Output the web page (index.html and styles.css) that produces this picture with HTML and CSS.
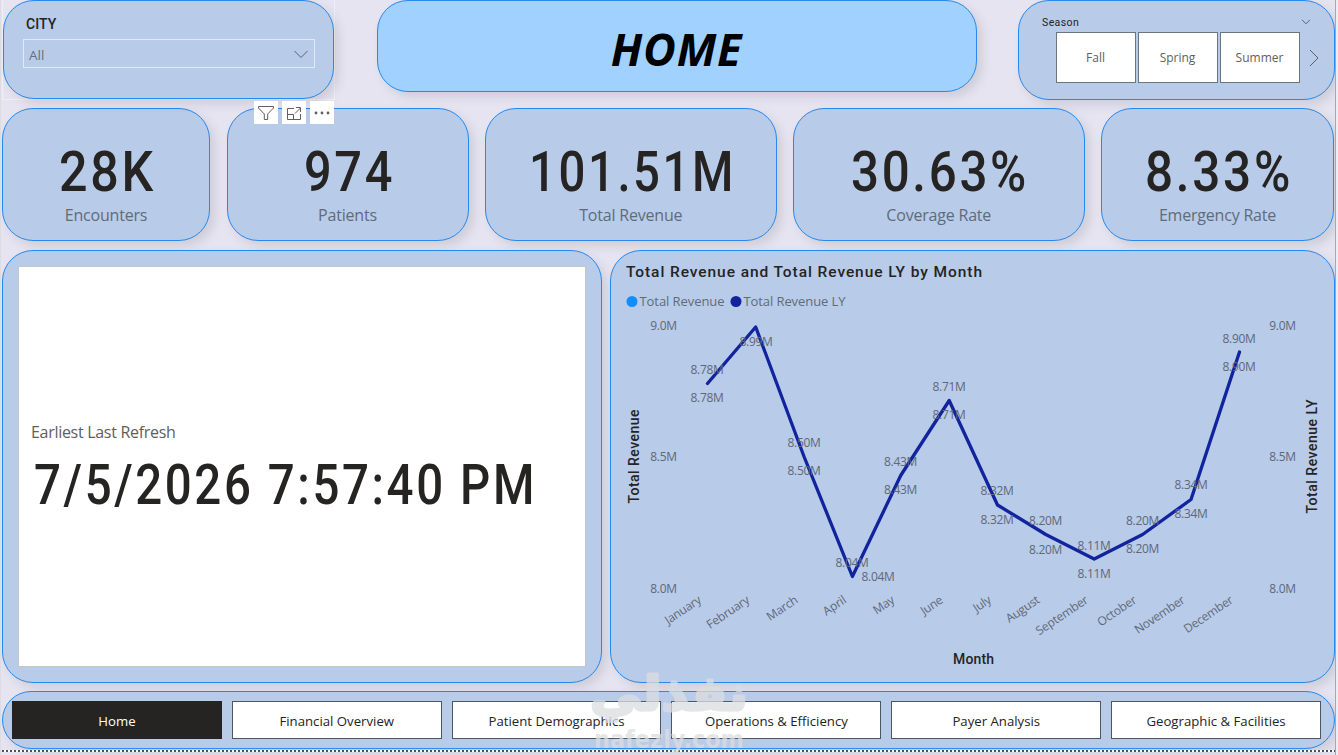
FILE: index.html
```
<!DOCTYPE html>
<html lang="en">
<head>
  <meta charset="UTF-8">
  <meta name="viewport" content="width=device-width, initial-scale=1.0">
  <title>Home</title>
  <link rel="stylesheet" href="styles.css">
</head>
<body>
  <div class="report">
    <div class="row top-row">
      <div class="city-slicer">
        <div class="card city-card">
          <label class="slicer-title">CITY</label>
          <div class="dropdown">
            <span>All</span>
            <svg width="14" height="9" viewBox="0 0 14 9"><path d="M0.5 1 L7 7.5 L13.5 1"/></svg>
          </div>
        </div>
        <div class="visual-tools">
          <button><svg width="18" height="18" viewBox="0 0 18 18"><path d="M1.5 2.5 H16.5 V4 L10.7 10 V15.5 H7.3 V10 L1.5 4 Z"/></svg></button>
          <button><svg width="18" height="18" viewBox="0 0 18 18"><path d="M9 4.500 H2.500 V15.500 H15.500 V10 M2.500 10.500 H8.500 V15.500 M10 9.500 L15.500 4 M11 3.500 H15.500 V8"/></svg></button>
          <button><svg class="dots" width="18" height="18" viewBox="0 0 18 18"><circle cx="3" cy="9" r="1.4"/><circle cx="9" cy="9" r="1.4"/><circle cx="15" cy="9" r="1.4"/></svg></button>
        </div>
      </div>

      <div class="card header-card">
        <h1>HOME</h1>
      </div>

      <div class="card season-card">
        <div class="season-head">
          <span>Season</span>
          <svg width="10" height="6" viewBox="0 0 10 6"><path d="M1 0.8 L5 4.8 L9 0.8"/></svg>
        </div>
        <div class="season-tiles">
          <div class="tile">Fall</div>
          <div class="tile">Spring</div>
          <div class="tile">Summer</div>
          <svg width="10" height="18" viewBox="0 0 10 18"><path d="M1 1 L9 9 L1 17"/></svg>
        </div>
      </div>
    </div>

    <div class="row kpi-row">
      <div class="card kpi">
        <svg class="value" width="94" height="46"><text x="0" y="43" textLength="97" lengthAdjust="spacingAndGlyphs">28K</text></svg>
        <span class="kpi-label">Encounters</span>
      </div>
      <div class="card kpi">
        <svg class="value" width="88" height="46"><text x="0" y="43" textLength="91" lengthAdjust="spacingAndGlyphs">974</text></svg>
        <span class="kpi-label">Patients</span>
      </div>
      <div class="card kpi">
        <svg class="value" width="206" height="46"><text x="1" y="43" textLength="207" lengthAdjust="spacingAndGlyphs">101.51M</text></svg>
        <span class="kpi-label">Total Revenue</span>
      </div>
      <div class="card kpi">
        <svg class="value" width="176" height="46"><text x="0" y="43" textLength="178" lengthAdjust="spacingAndGlyphs">30.63%</text></svg>
        <span class="kpi-label">Coverage Rate</span>
      </div>
      <div class="card kpi">
        <svg class="value" width="146" height="46"><text x="0" y="43" textLength="148" lengthAdjust="spacingAndGlyphs">8.33%</text></svg>
        <span class="kpi-label">Emergency Rate</span>
      </div>
    </div>

    <div class="row main-row">
      <div class="card refresh-card">
        <div class="refresh">
          <span class="refresh-label">Earliest Last Refresh</span>
          <svg class="value" width="510" height="52"><text x="0" y="44" textLength="503" lengthAdjust="spacingAndGlyphs">7/5/2026 7:57:40 PM</text></svg>
        </div>
      </div>

      <div class="card chart-card">
        <svg class="chart" width="723" height="431" viewBox="611 251 723 431">
          <text class="chart-title" x="626" y="277" textLength="356">Total Revenue and Total Revenue LY by Month</text>
          <circle cx="632" cy="301.500" r="5.500" fill="#118dff"/>
          <text class="legend" x="639.500" y="306" textLength="85">Total Revenue</text>
          <circle cx="736" cy="301.500" r="5.500" fill="#12239e"/>
          <text class="legend" x="743.500" y="306" textLength="102">Total Revenue LY</text>

          <g class="labels">
            <text x="663.500" y="330">9.0M</text>
            <text x="663.500" y="461">8.5M</text>
            <text x="663.500" y="593">8.0M</text>
            <text x="1282.500" y="330">9.0M</text>
            <text x="1282.500" y="461">8.5M</text>
            <text x="1282.500" y="593">8.0M</text>
          </g>

          <polyline class="line" points="707.5,383.500 755.7,327 804,456.500 852.4,576.500 900.7,475.500 949.2,400.500 997.5,505 1045.8,534.500 1094.2,559 1142.6,534.500 1191,499.500 1239.500,352"/>

          <g class="labels">
            <text x="707" y="374">8.78M</text>
            <text x="707" y="402">8.78M</text>
            <text x="756" y="346">8.99M</text>
            <text x="804" y="447">8.50M</text>
            <text x="804" y="475">8.50M</text>
            <text x="852" y="567">8.04M</text>
            <text x="878" y="581">8.04M</text>
            <text x="900.500" y="466">8.43M</text>
            <text x="900.500" y="494">8.43M</text>
            <text x="949" y="391">8.71M</text>
            <text x="949" y="419">8.71M</text>
            <text x="997" y="495">8.32M</text>
            <text x="997" y="524">8.32M</text>
            <text x="1045.500" y="525">8.20M</text>
            <text x="1045.500" y="554">8.20M</text>
            <text x="1094" y="550">8.11M</text>
            <text x="1094" y="578">8.11M</text>
            <text x="1142.500" y="525">8.20M</text>
            <text x="1142.500" y="553">8.20M</text>
            <text x="1191" y="489">8.34M</text>
            <text x="1191" y="518">8.34M</text>
            <text x="1239" y="343">8.90M</text>
            <text x="1239" y="371">8.90M</text>
          </g>

          <g class="months">
            <text transform="translate(702 602) rotate(-34)">January</text>
            <text transform="translate(750.300 602) rotate(-34)">February</text>
            <text transform="translate(798.700 602) rotate(-34)">March</text>
            <text transform="translate(847 602) rotate(-34)">April</text>
            <text transform="translate(895.400 602) rotate(-34)">May</text>
            <text transform="translate(943.800 602) rotate(-34)">June</text>
            <text transform="translate(992 602) rotate(-34)">July</text>
            <text transform="translate(1040.500 602) rotate(-34)">August</text>
            <text transform="translate(1089 602) rotate(-34)">September</text>
            <text transform="translate(1137.300 602) rotate(-34)">October</text>
            <text transform="translate(1185.700 602) rotate(-34)">November</text>
            <text transform="translate(1234 602) rotate(-34)">December</text>
          </g>

          <text class="axis-title" transform="translate(639 503.500) rotate(-90)" textLength="94">Total Revenue</text>
          <text class="axis-title" transform="translate(1317 513.500) rotate(-90)" textLength="114">Total Revenue LY</text>
          <text class="axis-title" x="953" y="664" textLength="41">Month</text>
        </svg>
      </div>
    </div>

    <div class="card nav-card">
      <a class="nav-button active">Home</a>
      <a class="nav-button">Financial Overview</a>
      <a class="nav-button">Patient Demographics</a>
      <a class="nav-button">Operations &amp; Efficiency</a>
      <a class="nav-button">Payer Analysis</a>
      <a class="nav-button">Geographic &amp; Facilities</a>
    </div>
    <div class="page-end"></div>

    <svg class="watermark" width="180" height="95" viewBox="580 660 180 95">
      <text class="arabic" x="669" y="710" textLength="158" lengthAdjust="spacingAndGlyphs">نفذلي</text>
      <text class="latin" x="669" y="748" textLength="150" lengthAdjust="spacingAndGlyphs">nafezly.com</text>
    </svg>
  </div>
</body>
</html>
```
FILE: styles.css
```
* {
  box-sizing: border-box;
}

body {
  margin: 0;
  background-color: #eeedf3;
  font-family: "Open Sans", sans-serif;
  color: #252423;
  overflow: hidden;
}

svg {
  display: block;
  flex: none;
}

.report {
  position: relative;
  display: flex;
  flex-direction: column;
  width: 1336px;
  height: 755px;
  padding-left: 1px;
  background-color: #e6e4f1;
  border-left: 1px solid #dcdde0;
  border-right: 1px solid #a5a8b4;
  overflow: hidden;
}

.row {
  display: flex;
}

.card {
  background-color: #b8cbe9;
  border: 1px solid #2789ed;
  border-radius: 31px;
  box-shadow: 5px 5px 10px rgba(90, 95, 105, 0.17);
}

/* top row */
.top-row {
  height: 108px;
  justify-content: space-between;
  align-items: flex-start;
}

.city-slicer {
  position: relative;
  width: 333px;
  height: 100px;
  border: 1px solid #eef0f5;
  border-top: none;
}

.city-card {
  height: 99px;
  padding: 15px 18px 0 19px;
}

.slicer-title {
  display: block;
  padding-left: 3px;
  font-family: Roboto, sans-serif;
  font-weight: 500;
  font-size: 14px;
  line-height: 16px;
  letter-spacing: 0.1px;
}

.dropdown {
  display: flex;
  align-items: center;
  justify-content: space-between;
  height: 29px;
  margin-top: 7px;
  padding: 2px 6px 0 5px;
  border: 1px solid #e2e9f4;
  font-size: 13.5px;
  color: #66707d;
}

.dropdown svg,
.season-card svg {
  fill: none;
  stroke: #59616d;
  stroke-width: 1;
}

/* hover toolbar that hangs under the selected slicer */
.visual-tools {
  position: absolute;
  right: 0;
  top: 101px;
  display: flex;
  gap: 4px;
  z-index: 2;
}

.visual-tools button {
  width: 24px;
  height: 23px;
  padding: 3px;
  border: none;
  background-color: #fff;
}

.visual-tools svg {
  fill: none;
  stroke: #605e5c;
  stroke-width: 1;
}

.visual-tools .dots {
  fill: #605e5c;
  stroke: none;
}

.header-card {
  width: 600px;
  height: 92px;
  background-color: #a0d1ff;
  display: flex;
  align-items: center;
  justify-content: center;
}

h1 {
  margin: 5px 0 0;
  font-size: 45px;
  line-height: 50px;
  font-weight: 700;
  font-style: italic;
  letter-spacing: 0.8px;
  color: #000;
}

.season-card {
  width: 317px;
  height: 100px;
  padding: 14px 15px 0 23px;
}

.season-head {
  display: flex;
  justify-content: space-between;
  align-items: center;
  height: 14px;
  padding-right: 8px;
  font-family: Roboto, sans-serif;
  font-size: 10.5px;
  letter-spacing: 0.4px;
}

.season-tiles {
  display: flex;
  align-items: center;
  gap: 2px;
  margin-top: 3px;
  padding-left: 13.5px;
}

.tile {
  width: 80px;
  height: 51px;
  border: 1px solid #69757f;
  background-color: #fff;
  font-size: 12px;
  line-height: 50px;
  text-align: center;
  color: #605e5c;
}

.season-tiles svg {
  margin-left: 7px;
}

/* number cards */
.kpi-row {
  gap: 16.5px;
  height: 142px;
}

.kpi {
  display: flex;
  flex-direction: column;
  align-items: center;
  flex: none;
  height: 133px;
  padding-top: 39px;
}

.kpi:nth-child(1) { width: 208px; }
.kpi:nth-child(2) { width: 242px; }
.kpi:nth-child(3) { width: 291.5px; }
.kpi:nth-child(4) { width: 291.5px; }
.kpi:nth-child(5) { width: 233px; }

.value {
  fill: #252423;
  font-family: Roboto, sans-serif;
  font-size: 55px;
  font-weight: 500;
  letter-spacing: 3px;
  overflow: visible;
}

.kpi-label {
  margin-top: 9px;
  font-size: 16px;
  line-height: 24px;
  letter-spacing: -0.2px;
  color: #5f6b7b;
}

/* refresh date and chart */
.main-row {
  gap: 8px;
  height: 441px;
}

.refresh-card {
  width: 600px;
  height: 433px;
  padding: 15px;
}

.refresh {
  display: flex;
  flex-direction: column;
  justify-content: center;
  width: 568px;
  height: 401px;
  padding: 0 0 1px 12px;
  border: 1px solid #c8c6c4;
  background-color: #fff;
}

.refresh-label {
  font-size: 16px;
  line-height: 22px;
  letter-spacing: -0.3px;
  color: #605e5c;
}

.refresh .value {
  margin: 17px 0 0 3px;
}

.chart-card {
  width: 725px;
  height: 433px;
}

.chart-title,
.axis-title {
  font-family: Roboto, sans-serif;
  font-weight: 500;
  fill: #252423;
}

.chart-title {
  font-size: 15.5px;
}

.axis-title {
  font-size: 14px;
}

.legend {
  font-size: 13px;
  fill: #5f6b7b;
}

.labels {
  font-size: 12px;
  letter-spacing: -0.3px;
  text-anchor: middle;
  fill: #5f6877;
}

.months {
  font-size: 12px;
  letter-spacing: -0.2px;
  text-anchor: end;
  fill: #5f6877;
}

.line {
  fill: none;
  stroke: #12239e;
  stroke-width: 3.3;
  stroke-linecap: round;
  stroke-linejoin: round;
}

/* page navigation */
.nav-card {
  display: flex;
  gap: 10px;
  flex: none;
  width: 1333px;
  height: 58px;
  padding: 9px 13px 9px 9px;
}

.nav-button {
  flex: 1;
  border: 1px solid #4c5661;
  background-color: #fff;
  font-size: 13.2px;
  line-height: 39px;
  text-align: center;
  color: #252423;
}

.nav-button.active {
  border-color: #252423;
  background-color: #252423;
  color: #fff;
}

.page-end {
  flex: none;
  height: 2px;
  margin-top: 1px;
  background: repeating-linear-gradient(to right, #50505c 0 2px, #fff 2px 4px);
}

.watermark {
  position: absolute;
  left: 579px;
  top: 660px;
  z-index: 3;
  fill: #dcdde0;
  opacity: 0.75;
  text-anchor: middle;
  font-family: "DejaVu Sans", sans-serif;
  font-weight: bold;
}

.arabic {
  font-size: 48px;
  stroke: #dcdde0;
  stroke-width: 3;
  stroke-linejoin: round;
}

.latin {
  font-size: 24px;
}
```
